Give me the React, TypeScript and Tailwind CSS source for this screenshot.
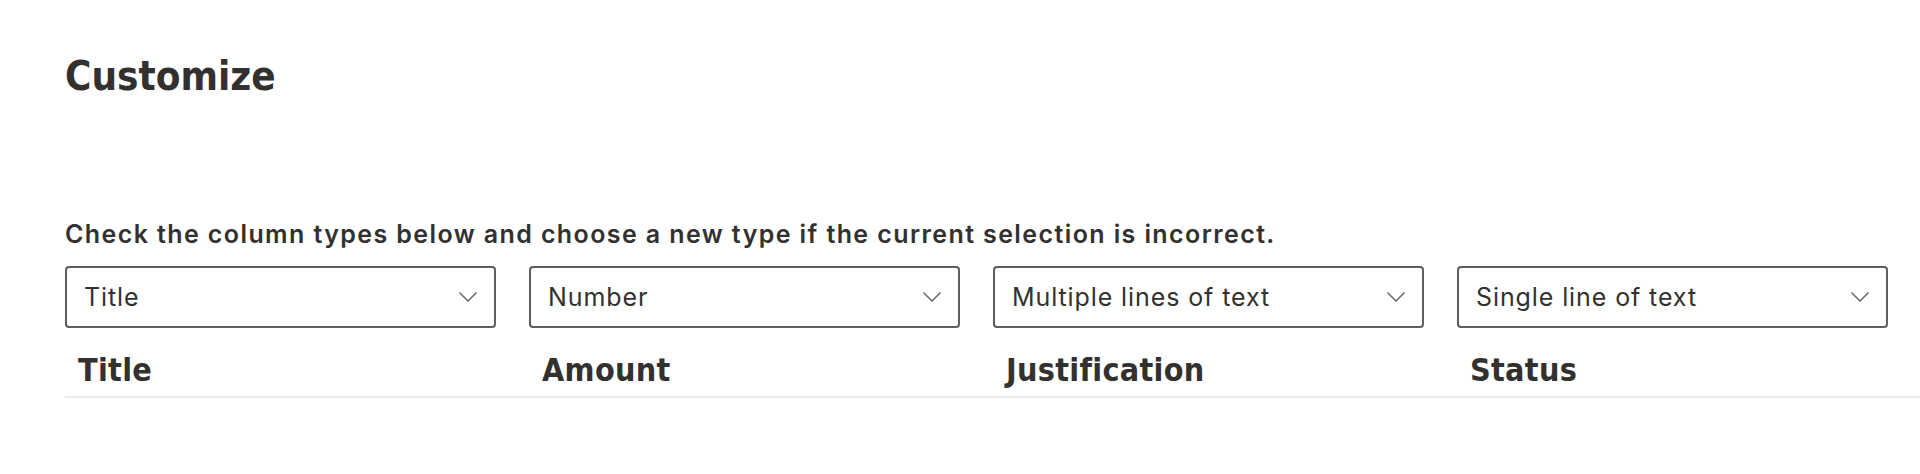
const columns = [
  { type: 'Title', name: 'Title' },
  { type: 'Number', name: 'Amount' },
  { type: 'Multiple lines of text', name: 'Justification' },
  { type: 'Single line of text', name: 'Status' },
];

const headingFont = { fontFamily: '"DejaVu Sans Condensed", "DejaVu Sans", sans-serif', fontStretch: 'condensed' as const };

function Chevron() {
  return (
    <svg width="20" height="12" viewBox="0 0 20 12" fill="none" className="text-[#605e5c]">
      <polyline points="1.5,1.5 10,10 18.5,1.5" stroke="currentColor" strokeWidth="1.4" />
    </svg>
  );
}

function TypeSelect({ value }: { value: string }) {
  return (
    <div className="flex h-[62px] items-center justify-between rounded-[4px] border-2 border-[#605e5c] bg-white pl-[17px] pr-[16px]">
      <span className="text-[25px] leading-[32px] tracking-[0.9px] text-[#323130]">{value}</span>
      <Chevron />
    </div>
  );
}

export default function App() {
  return (
    <div className="flex min-h-[474px] bg-white font-['Inter',sans-serif]">
      {/* sliver of the page behind the panel */}
      <div className="flex w-[2px] flex-col">
        <div className="h-[25px] bg-[#2b579a]" />
        <div className="h-[33px] bg-[#8a8a8a]" />
        <div className="h-[95px] bg-[#4b3a7a]" />
        <div className="flex-1 bg-[#7a7a7a]" />
      </div>

      <div className="flex-1 pl-[65px] pr-[14px] pt-[52px]">
        <h1 className="text-[40px] font-bold leading-[48px] text-[#323130]" style={headingFont}>
          Customize
        </h1>

        <p className="mt-[118px] text-[25px] font-semibold leading-[32px] tracking-[1.4px] text-[#323130]">
          Check the column types below and choose a new type if the current selection is incorrect.
        </p>

        <div className="mt-[16px] grid grid-cols-[repeat(4,431px)] gap-x-[33px]">
          {columns.map((c) => (
            <TypeSelect key={c.name} value={c.type} />
          ))}
        </div>

        <div className="mt-[22px] grid grid-cols-[repeat(4,464px)] border-b-2 border-[#edebe9] pb-[6px]">
          {columns.map((c) => (
            <div
              key={c.name}
              className="pl-[13px] text-[32px] font-bold leading-[40px] tracking-[0.3px] text-[#323130]"
              style={headingFont}
            >
              {c.name}
            </div>
          ))}
        </div>
      </div>
    </div>
  );
}
